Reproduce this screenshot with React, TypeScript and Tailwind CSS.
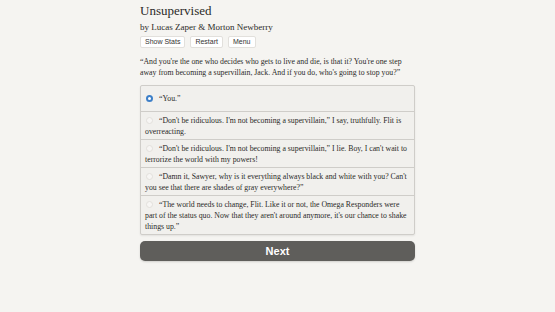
import { useState } from "react";

const choices = [
  "\u201cYou.\u201d",
  "\u201cDon't be ridiculous. I'm not becoming a supervillain,\u201d I say, truthfully. Flit is overreacting.",
  "\u201cDon't be ridiculous. I'm not becoming a supervillain,\u201d I lie. Boy, I can't wait to terrorize the world with my powers!",
  "\u201cDamn it, Sawyer, why is it everything always black and white with you? Can't you see that there are shades of gray everywhere?\u201d",
  "\u201cThe world needs to change, Flit. Like it or not, the Omega Responders were part of the status quo. Now that they aren't around anymore, it's our chance to shake things up.\u201d",
];

export default function App() {
  const [picked, setPicked] = useState(0);

  return (
    <div className="min-h-[312px] w-full bg-[#f5f4f1] font-['Liberation_Serif',serif] text-[#2b2a28]">
      <div className="mx-auto w-[275px] pt-[2px]">
        <h1 className="text-[13px] leading-[18px]">Unsupervised</h1>
        <div className="mt-[1px] text-[9px] leading-[12px]">by Lucas Zaper &amp; Morton Newberry</div>

        {/* top buttons */}
        <div className="mt-[3px] flex gap-[5px] font-['Liberation_Sans',sans-serif] text-[7px]">
          {["Show Stats", "Restart", "Menu"].map((b) => (
            <button
              key={b}
              className="h-[12px] rounded-[2px] border border-[#e2e0dc] bg-white px-[4px] leading-[10px] text-[#333]"
            >
              {b}
            </button>
          ))}
        </div>

        <p className="mt-[8px] text-[7.8px] leading-[11px]">
          &ldquo;And you're the one who decides who gets to live and die, is that it? You're one step away from
          becoming a supervillain, Jack. And if you do, who's going to stop you?&rdquo;
        </p>

        {/* choices */}
        <div className="mt-[7px] rounded-[2px] border border-[#cfcdc9] bg-[#f1f0ed] shadow-[0_1px_2px_rgba(0,0,0,0.08)]">
          {choices.map((c, i) => (
            <label
              key={i}
              onClick={() => setPicked(i)}
              className={`block px-[4px] text-[7.8px] leading-[11px] ${i === 0 ? "py-[7px]" : "py-[2.5px]"} ${
                i > 0 ? "border-t border-[#cfcdc9]" : ""
              }`}
            >
              <span
                className={`ml-[1px] mr-[6px] inline-block h-[7px] w-[7px] translate-y-[1px] rounded-full ${
                  picked === i
                    ? "border-[2px] border-[#3d7fc8] bg-white"
                    : "border border-[#e2e0dc] bg-[#f7f6f4]"
                }`}
              />
              {c}
            </label>
          ))}
        </div>

        <button className="mt-[6px] h-[20px] w-full rounded-[5px] bg-[#5f5e5b] font-['Liberation_Sans',sans-serif] text-[11px] font-bold text-white shadow-[0_1px_2px_rgba(0,0,0,0.15)]">
          Next
        </button>
      </div>
    </div>
  );
}
